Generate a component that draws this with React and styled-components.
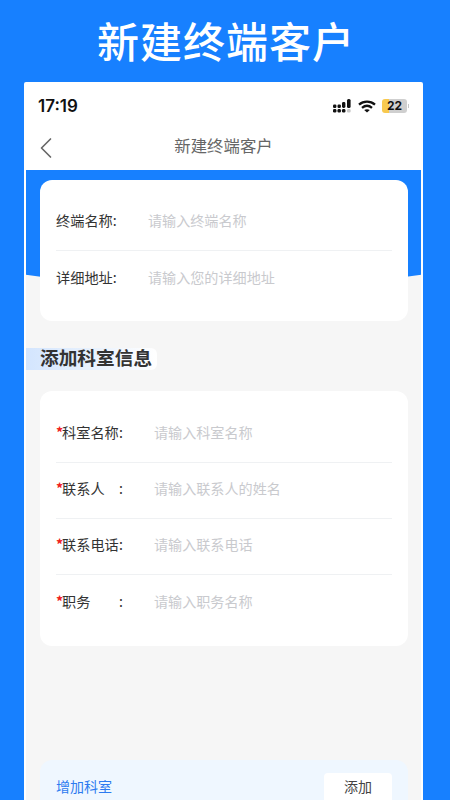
import styled, { createGlobalStyle } from 'styled-components'
import { ChevronLeft } from 'lucide-react'

const CJK = `"Noto Sans CJK SC", "Noto Sans", sans-serif`

const GlobalStyle = createGlobalStyle`
    html, body {
        margin: 0;
        padding: 0;
        background: #1780ff;
    }

    * {
        box-sizing: border-box;
    }
`

const Page = styled.div`
    width: 450px;
    height: 800px;
    overflow: hidden;
    padding: 0 27px 0 24px;
    background: #1780ff;
    font-family: ${CJK};
`

const Headline = styled.h1`
    margin: 0;
    height: 82px;
    padding: 5px 0 0 5px;
    text-align: center;
    line-height: 70px;
    font-size: 42px;
    font-weight: 500;
    letter-spacing: 1px;
    color: #fff;
`

const Phone = styled.div`
    height: 718px;
    overflow: hidden;
    border-radius: 2px 2px 0 0;
    background: #fff;
`

const StatusBar = styled.div`
    display: flex;
    align-items: center;
    justify-content: space-between;
    height: 48px;
    padding: 0 14px;
`

const Clock = styled.span`
    font-family: Inter, "Liberation Sans", sans-serif;
    font-size: 17px;
    font-weight: 600;
    color: #111;
`

const StatusIcons = styled.div`
    display: flex;
    align-items: center;
    gap: 6px;
`

const Battery = styled.div`
    display: flex;
    align-items: center;
    gap: 1px;
`

const BatteryBody = styled.span`
    width: 25px;
    height: 14px;
    border-radius: 3px;
    background: linear-gradient(90deg, #f8c94f 0 7px, #cfcfcf 7px);
    text-align: center;
    line-height: 14px;
    font-family: Inter, "Liberation Sans", sans-serif;
    font-size: 12px;
    font-weight: 700;
    color: #111;
`

const BatteryCap = styled.span`
    width: 1px;
    height: 4px;
    background: #c8c8c8;
`

const NavBar = styled.div`
    display: grid;
    grid-template-columns: 40px 1fr 40px;
    align-items: center;
    height: 40px;
    padding-bottom: 10px;
    color: #666;
`

const BackButton = styled.button`
    display: grid;
    place-items: center;
    height: 30px;
    padding: 0 0 4px 3px;
    border: none;
    background: none;
    color: #666;
`

const NavTitle = styled.span`
    text-align: center;
    line-height: 30px;
    font-size: 16.4px;
    color: #666;
`

const Content = styled.div`
    position: relative;
    height: 630px;
    margin: 0 2px;
    padding: 10px 13px 0 14px;
    background: #f6f6f6;

    &::before {
        content: '';
        position: absolute;
        top: 0;
        left: 0;
        right: 0;
        height: 118px;
        clip-path: ellipse(430px 118px at 50% 0);
        background: #1780ff;
    }
`

const Card = styled.section`
    position: relative;
    margin-bottom: ${({ $gap }) => $gap || 0}px;
    border-radius: 12px;
    padding: ${({ $top }) => $top}px 16px ${({ $bottom }) => $bottom}px;
    background: #fff;
`

const Row = styled.div`
    display: flex;
    align-items: center;
    height: 56px;
    padding-bottom: 5px;
    border-bottom: ${({ $last }) => ($last ? 'none' : '1px solid #eff1f3')};
    font-size: 14.2px;
    color: #333;
`

const Label = styled.span`
    display: flex;
    flex: none;
    width: ${({ $width }) => $width}px;
    white-space: nowrap;
`

const LabelText = styled.span`
    display: inline-flex;
    justify-content: space-between;
    width: 61px;
`

const Star = styled.span`
    width: 6px;
    font-weight: 700;
    color: #f01d1d;
`

const Placeholder = styled.span`
    font-size: 14.1px;
    color: #c9cace;
`

const SectionHead = styled.div`
    position: relative;
    display: flex;
    align-items: center;
    width: 131px;
    height: 22px;
    margin: 0 0 21px -14px;
    border-radius: 0 6px 6px 0;
    padding: 0 0 5px 14px;
    background: linear-gradient(90deg, #d3e5fe 0%, #e6f0fd 45%, #ffffff 100%);
    white-space: nowrap;
    font-size: 18.7px;
    font-weight: 700;
    color: #333;
`

const AddBar = styled.div`
    position: absolute;
    top: 590px;
    left: 14px;
    right: 13px;
    display: flex;
    align-items: flex-start;
    justify-content: space-between;
    height: 60px;
    border-radius: 12px;
    padding: 13px 16px;
    background: #eff7ff;
`

const AddLabel = styled.span`
    line-height: 27px;
    font-size: 14px;
    color: #2d7bf0;
`

const AddButton = styled.button`
    width: 68px;
    height: 40px;
    border: none;
    border-radius: 4px;
    padding: 0 0 15px;
    background: #fff;
    font-family: ${CJK};
    font-size: 14px;
    color: #444;
`

const SignalIcon = () => (
    <svg width="19" height="14" viewBox="0 0 19 14">
        <g fill="#111">
            <rect x="0" y="5.5" width="3.4" height="3.4" rx="1.2" />
            <rect x="0" y="10" width="3.4" height="3.4" rx="1.2" />
            <rect x="4.5" y="5.5" width="3.4" height="3.4" rx="1.2" />
            <rect x="4.5" y="10" width="3.4" height="3.4" rx="1.2" />
            <rect x="9" y="3" width="3.4" height="5.9" rx="1.4" />
            <rect x="9" y="10" width="3.4" height="3.4" rx="1.2" />
            <rect x="14" y="0" width="3.6" height="8.9" rx="1.5" />
            <rect x="14" y="10" width="3.6" height="3.4" rx="1.2" fill="#c8c8c8" />
        </g>
    </svg>
)

const WifiIcon = () => (
    <svg width="18" height="13" viewBox="0 0 18 13" fill="none" stroke="#111" strokeWidth="2.3">
        <path d="M1 4.6C5.6 .6 12.4 .6 17 4.6" />
        <path d="M4 7.8c3-2.5 7-2.5 10 0" />
        <path d="M9 12.6l-2.8-2.5c1.6-1.2 4-1.2 5.6 0z" fill="#111" stroke="none" />
    </svg>
)

const terminalRows = [
    { label: '终端名称:', hint: '请输入终端名称' },
    { label: '详细地址:', hint: '请输入您的详细地址', last: true },
]

const deptRows = [
    { label: ['科室名称', ':'], hint: '请输入科室名称' },
    { label: ['联系人', ':'], hint: '请输入联系人的姓名' },
    { label: ['联系电话', ':'], hint: '请输入联系电话' },
    { label: ['职务', ':'], hint: '请输入职务名称', last: true },
]

export default function App() {
    return (
        <Page>
            <GlobalStyle />
            <Headline>新建终端客户</Headline>
            <Phone>
                <StatusBar>
                    <Clock>17:19</Clock>
                    <StatusIcons>
                        <SignalIcon />
                        <WifiIcon />
                        <Battery>
                            <BatteryBody>22</BatteryBody>
                            <BatteryCap />
                        </Battery>
                    </StatusIcons>
                </StatusBar>
                <NavBar>
                    <BackButton>
                        <ChevronLeft size={36} strokeWidth={1.1} />
                    </BackButton>
                    <NavTitle>新建终端客户</NavTitle>
                </NavBar>
                <Content>
                    <Card $gap={27} $top={15} $bottom={14}>
                        {terminalRows.map(row => (
                            <Row key={row.label} $last={row.last}>
                                <Label $width={92}>{row.label}</Label>
                                <Placeholder>{row.hint}</Placeholder>
                            </Row>
                        ))}
                    </Card>
                    <SectionHead>添加科室信息</SectionHead>
                    <Card $top={16} $bottom={15}>
                        {deptRows.map(row => (
                            <Row key={row.hint} $last={row.last}>
                                <Label $width={98}>
                                    <Star>*</Star>
                                    <LabelText>
                                        <span>{row.label[0]}</span>
                                        <span>{row.label[1]}</span>
                                    </LabelText>
                                </Label>
                                <Placeholder>{row.hint}</Placeholder>
                            </Row>
                        ))}
                    </Card>
                    <AddBar>
                        <AddLabel>增加科室</AddLabel>
                        <AddButton>添加</AddButton>
                    </AddBar>
                </Content>
            </Phone>
        </Page>
    )
}
